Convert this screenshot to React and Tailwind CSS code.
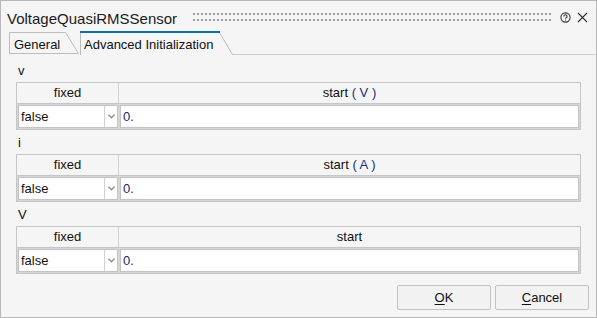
import { useState } from "react";

const sections = [
  { label: "v", unit: "V" },
  { label: "i", unit: "A" },
  { label: "V", unit: null },
];

const dotCols = Array.from({ length: 90 }, (_, i) => i * 4);

const Grip = () => (
  <svg width="360" height="9" className="block">
    {dotCols.map((x) => (
      <g key={x}>
        <rect x={x} y="0" width="2" height="2" fill="#9c9c9c" />
        <rect x={x} y="6" width="2" height="2" fill="#9c9c9c" />
      </g>
    ))}
  </svg>
);

const HelpIcon = () => (
  <svg width="11" height="11" viewBox="0 0 11 11" className="block">
    <circle cx="5.5" cy="5.5" r="4.6" fill="none" stroke="#333" strokeWidth="1.1" />
    <path d="M3.9 4.4a1.6 1.6 0 1 1 2.3 1.4c-.5.3-.7.5-.7 1" fill="none" stroke="#333" strokeWidth="1.1" />
    <circle cx="5.5" cy="8" r="0.6" fill="#333" />
  </svg>
);

const CloseIcon = () => (
  <svg width="11" height="11" viewBox="0 0 11 11" className="block">
    <path d="M1 1L10 10M10 1L1 10" stroke="#333" strokeWidth="1.1" />
  </svg>
);

const Chevron = () => (
  <svg width="7" height="5" viewBox="0 0 7 5" className="block">
    <path d="M0.5 0.8L3.5 3.8L6.5 0.8" fill="none" stroke="#8c8c8c" strokeWidth="1.3" />
  </svg>
);

const Section = ({ label, unit }) => (
  <div className="flex flex-col">
    <div className="h-[24px] flex items-end pb-[3px] pl-[2px] text-[13px] leading-[16px] text-[#111]">
      {label}
    </div>
    <div className="border border-[#c6c6c6] bg-[#f5f5f5]">
      <div className="flex h-[21px] border-b border-[#c6c6c6] text-[13px] text-[#111]">
        <div className="w-[102px] border-r border-[#d2d2d2] flex items-center justify-center">
          fixed
        </div>
        <div className="flex-1 flex items-center justify-center">
          {unit ? (
            <span>
              start <span className="text-[#16307e]">( {unit} )</span>
            </span>
          ) : (
            "start"
          )}
        </div>
      </div>
      <div className="flex h-[25px] p-[1px] gap-[2px] bg-[#d6d6d6]">
        <div className="w-[100px] flex bg-white border border-[#c4c4c4]">
          <div className="flex-1 flex items-center pl-[2px] text-[13px] text-[#111]">
            false
          </div>
          <div className="w-[13px] border-l border-[#d0d0d0] flex items-center justify-center">
            <Chevron />
          </div>
        </div>
        <div className="flex-1 flex items-center bg-white border border-[#c4c4c4] pl-[2px] text-[13px] text-[#1a2a6a]">
          0.
        </div>
      </div>
    </div>
  </div>
);

export default function App() {
  const [active] = useState(1);

  return (
    <div className="w-[597px] h-[318px] bg-[#f5f5f5] border border-[#b8b8b8] flex flex-col font-['Liberation_Sans',Arial,sans-serif] overflow-hidden">
      {/* title bar */}
      <div className="h-[30px] flex items-center pl-[6px] pr-[8px]">
        <span className="text-[15px] text-[#1b1b1b] leading-none pt-[4px]">VoltageQuasiRMSSensor</span>
        <div className="ml-[16px] flex-1 flex items-center pt-[3px]">
          <Grip />
        </div>
        <div className="ml-[6px] flex items-center gap-[6px] pt-[3px]">
          <HelpIcon />
          <CloseIcon />
        </div>
      </div>

      {/* tabs */}
      <div className="h-[24px] flex items-end">
        <div className="w-[8px] h-full" />
        <div className="grid w-[70px] h-[22px] mb-[1px]">
          <svg width="70" height="22" className="[grid-area:1/1] block">
            <path d="M0.5 22V0.5H56.5L69.5 21.5H0.5" fill="none" stroke="#bdbdbd" />
          </svg>
          <div className="[grid-area:1/1] pl-[5px] pt-[3px] text-[13px] text-[#111]">General</div>
        </div>
        <div className="w-[1px]" />
        <div className="grid w-[154px] h-[24px]">
          <svg width="154" height="24" className="[grid-area:1/1] block">
            <path d="M0.5 24V1.5" fill="none" stroke="#bdbdbd" />
            <path d="M139.5 1.5L152.5 23.5H154" fill="none" stroke="#bdbdbd" />
            <path d="M0 1H140" fill="none" stroke={active === 1 ? "#0e6da6" : "#bdbdbd"} strokeWidth="2" />
          </svg>
          <div className="[grid-area:1/1] pl-[4px] pt-[4px] text-[13px] text-[#111]">
            Advanced Initialization
          </div>
        </div>
        <div className="flex-1 h-full border-b border-[#cdcdcd]" />
      </div>

      {/* content */}
      <div className="flex flex-col pl-[15px] pr-[15px] pt-[3px]">
        {sections.map((s) => (
          <Section key={s.label} label={s.label} unit={s.unit} />
        ))}
      </div>

      {/* footer */}
      <div className="mt-auto flex justify-end gap-[4px] pr-[7px] pb-[7px]">
        <button className="w-[94px] h-[25px] bg-[#f2f2f2] border border-[#c2c2c2] rounded-[2px] text-[13px] text-[#111]">
          <span className="underline underline-offset-2">O</span>K
        </button>
        <button className="w-[94px] h-[25px] bg-[#f2f2f2] border border-[#c2c2c2] rounded-[2px] text-[13px] text-[#111]">
          <span className="underline underline-offset-2">C</span>ancel
        </button>
      </div>
    </div>
  );
}
